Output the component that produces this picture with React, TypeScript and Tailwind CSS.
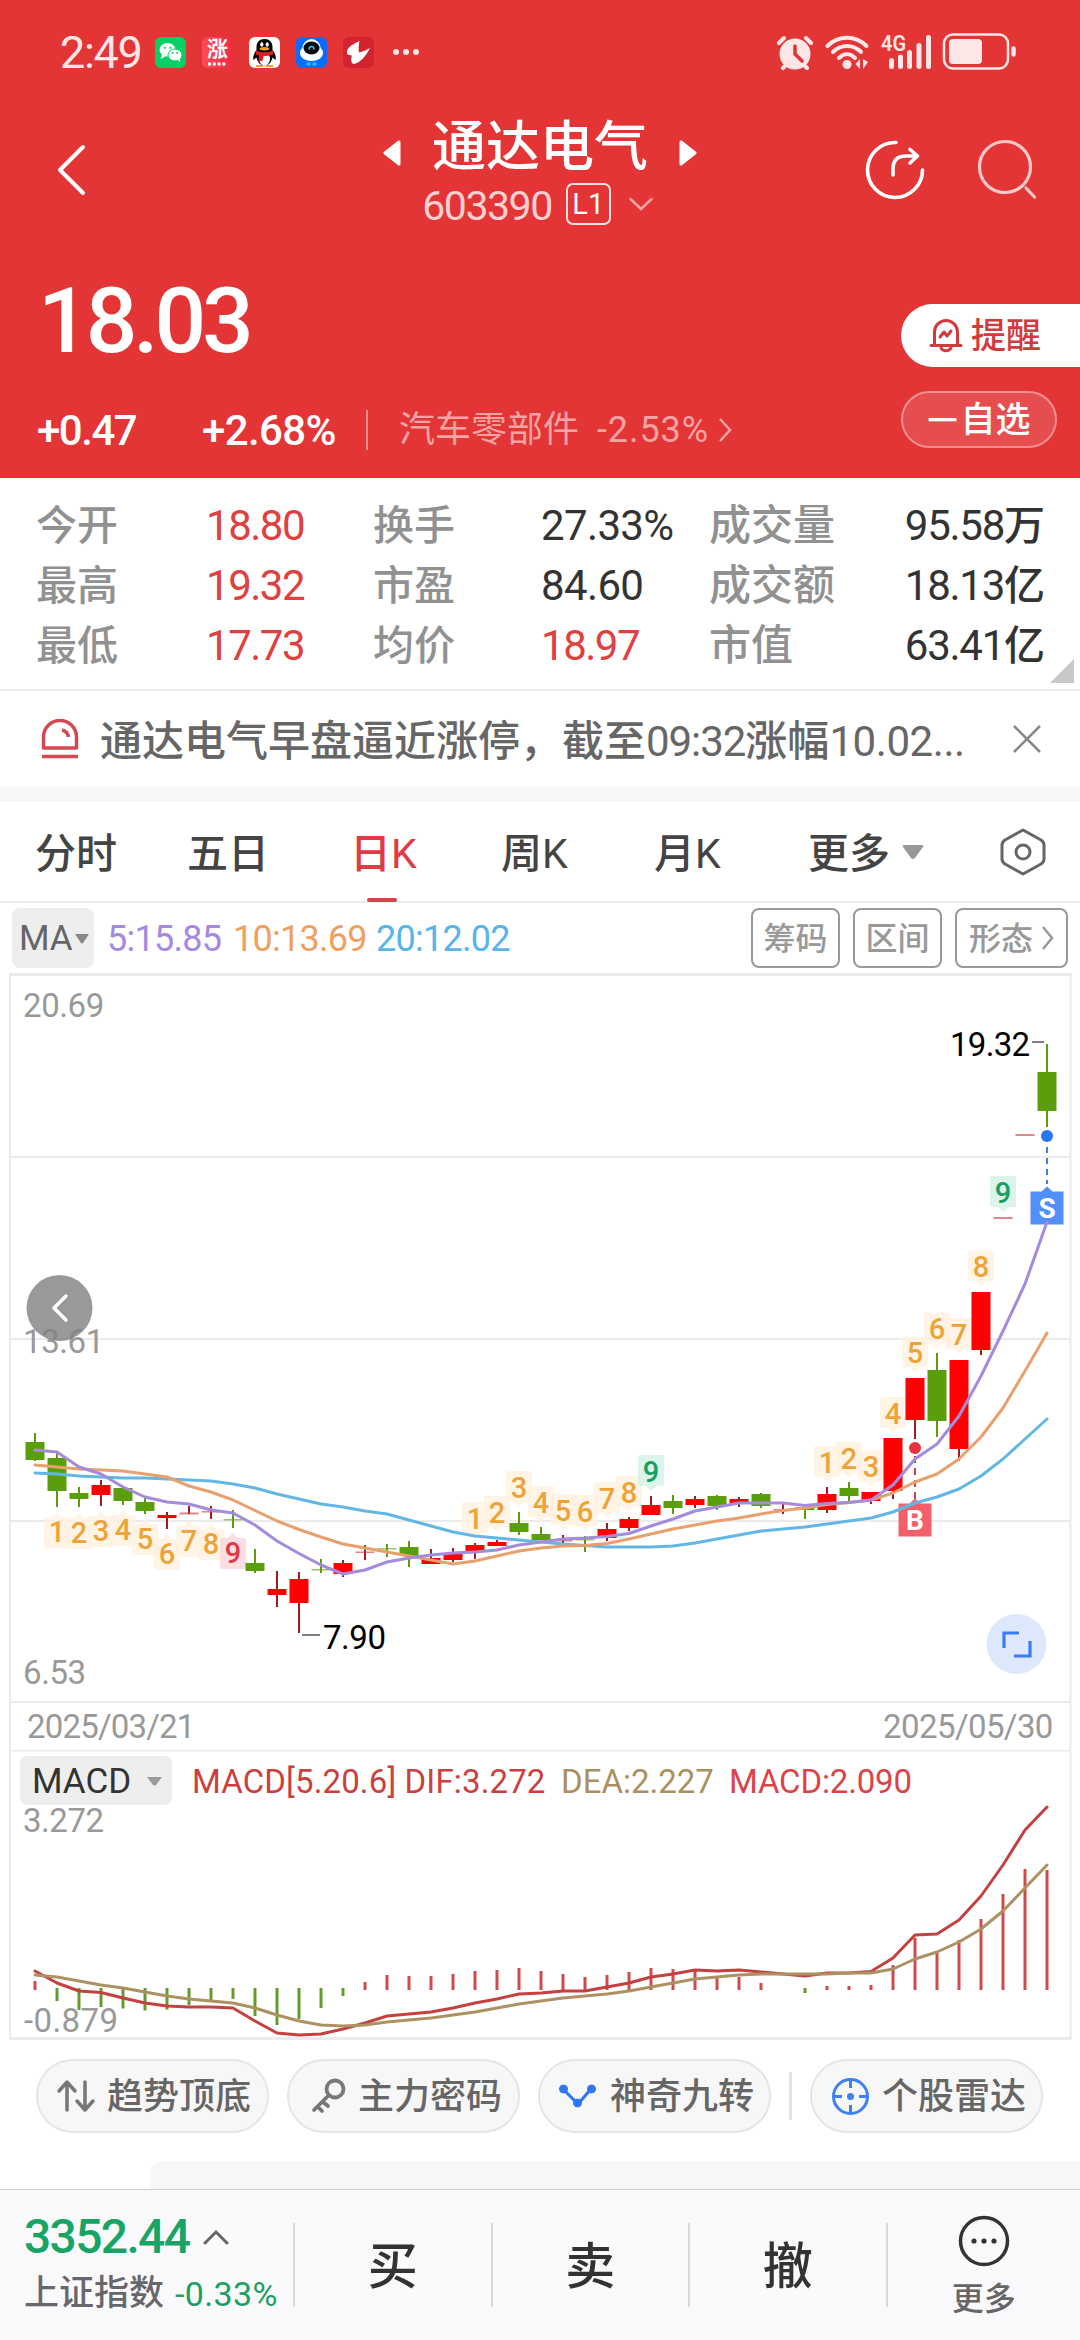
import React from 'react';

const X0 = 35;
const STEP = 22;
const RED = '#fe0000';
const GREEN = '#5a9e0c';

// [direction, high, low, body top, body bottom] in chart pixels
type Candle = ['r' | 'g', number, number, number, number];

const candles: Candle[] = [
  ['g', 1433, 1461, 1442, 1460],
  ['g', 1453, 1507, 1458, 1491],
  ['g', 1487, 1507, 1493, 1499],
  ['r', 1480, 1506, 1485, 1495],
  ['g', 1488, 1505, 1488, 1501],
  ['g', 1497, 1514, 1502, 1511],
  ['r', 1512, 1529, 1515, 1518],
  ['r', 1506, 1514, 1512.5, 1514.5],
  ['r', 1506, 1519, 1511, 1512.5],
  ['g', 1510, 1528, 1519, 1520.5],
  ['g', 1549, 1573, 1563, 1571],
  ['r', 1571, 1607, 1589, 1595],
  ['r', 1572, 1633, 1579, 1603],
  ['g', 1559, 1573, 1569, 1570.5],
  ['r', 1560, 1577, 1563, 1574],
  ['r', 1545, 1560, 1551.5, 1553],
  ['g', 1544, 1557, 1548, 1549.5],
  ['g', 1541, 1567, 1547, 1556],
  ['r', 1549, 1564, 1558, 1564],
  ['r', 1548, 1562, 1553, 1560],
  ['r', 1543, 1559, 1545, 1551],
  ['r', 1540, 1546, 1542, 1546],
  ['g', 1512, 1535, 1523, 1532],
  ['g', 1527, 1540, 1534, 1540],
  ['r', 1535, 1544, 1540, 1541.5],
  ['g', 1536, 1552, 1539, 1540.5],
  ['r', 1523, 1541, 1529, 1538],
  ['r', 1517, 1531, 1519, 1528],
  ['r', 1496, 1515, 1505, 1515],
  ['g', 1495, 1514, 1501, 1508],
  ['r', 1496, 1508, 1499, 1505],
  ['g', 1495, 1510, 1496, 1506],
  ['r', 1497, 1507, 1499, 1503],
  ['g', 1493, 1508, 1494, 1506],
  ['r', 1502, 1514, 1509, 1510.5],
  ['g', 1505, 1519, 1507, 1510],
  ['r', 1487, 1513, 1494, 1510],
  ['g', 1482, 1502, 1488, 1496],
  ['r', 1492, 1504, 1492, 1501],
  ['r', 1438, 1499, 1438, 1491],
  ['r', 1378, 1439, 1378, 1420],
  ['g', 1353, 1437, 1370, 1421],
  ['r', 1360, 1461, 1360, 1449],
  ['r', 1292, 1355, 1292, 1350],
  ['r', 1217, 1217, 1217, 1219],
  ['r', 1134, 1134, 1134, 1136],
  ['g', 1044, 1127, 1072, 1111],
];

const ma5 = [1450, 1452, 1467, 1474, 1487, 1497, 1502, 1504, 1510, 1513, 1525, 1541, 1553.5, 1565, 1574, 1570, 1562, 1558, 1555, 1553, 1552, 1550, 1545, 1542, 1539, 1538, 1536.5, 1533.5, 1526, 1519, 1511, 1507, 1503, 1503, 1503, 1505.5, 1503.5, 1502.5, 1500, 1485, 1459, 1444, 1416, 1376, 1331, 1284, 1222];
const ma10 = [1465, 1467, 1469, 1470, 1471, 1474, 1477, 1486, 1492, 1500, 1510.5, 1521, 1529.5, 1537, 1544, 1548, 1552, 1556, 1560, 1564, 1561, 1556, 1551, 1548, 1546, 1545.5, 1543.5, 1539, 1534, 1529, 1525, 1521, 1518, 1514, 1510.5, 1508, 1504.5, 1502.5, 1500, 1493, 1482, 1474, 1459, 1437, 1408, 1371, 1333];
const ma20 = [1473, 1474, 1476, 1477, 1478, 1478, 1479, 1480, 1481, 1484, 1488, 1494, 1499, 1504, 1507, 1511, 1514, 1520, 1526, 1532, 1536, 1538, 1540, 1542, 1544, 1545.5, 1547, 1547, 1547, 1546, 1543, 1539, 1535, 1531, 1529, 1527, 1524, 1521, 1518, 1512, 1503, 1497, 1489, 1476, 1459, 1439, 1419];

// nine-turn counters: [bar index, digit, centre y]
const marksBelow: [number, number, number][] = [
  [1, 1, 1531.5], [2, 2, 1532], [3, 3, 1530], [4, 4, 1529], [5, 5, 1538],
  [6, 6, 1553], [7, 7, 1540], [8, 8, 1543], [9, 9, 1552],
];
const marksAbove: [number, number, number][] = [
  [20, 1, 1518], [21, 2, 1512], [22, 3, 1487], [23, 4, 1502], [24, 5, 1510],
  [25, 6, 1511], [26, 7, 1498], [27, 8, 1492], [28, 9, 1471],
  [36, 1, 1462], [37, 2, 1458], [38, 3, 1466.5], [39, 4, 1413], [40, 5, 1352.5],
  [41, 6, 1328.5], [42, 7, 1334], [43, 8, 1266.5], [44, 9, 1192],
];

const hist = [1981, 2001, 2010, 2007, 2008.5, 2010.5, 2009.5, 2005, 2000, 1999, 2016, 2025, 2019, 2008, 1996, 1982, 1975, 1976, 1976, 1974, 1971, 1970, 1968, 1971, 1974, 1977, 1975, 1972, 1968, 1969, 1970, 1978, 1977, 1983, 1989, 1993, 1986, 1986, 1985, 1965, 1938, 1953, 1940, 1919, 1894, 1869, 1870];
const dif = [1971, 1983, 1991, 1992.5, 1998, 2003, 2006, 2007, 2007, 2008, 2021, 2033, 2035, 2034, 2029, 2023, 2016, 2014, 2012, 2008, 2003, 1999, 1994, 1993, 1991, 1991, 1987, 1983, 1977, 1974, 1970, 1971, 1970, 1972, 1974, 1976, 1973, 1973, 1971.5, 1958, 1935, 1934, 1920, 1896, 1865, 1830, 1807];
const dea = [1975, 1977, 1981, 1985, 1988, 1992, 1996, 1999, 2001, 2003, 2008, 2015, 2021, 2025, 2026, 2025, 2022, 2020, 2018, 2015, 2012, 2008, 2004, 2001, 1998, 1996, 1994, 1991, 1987, 1983, 1979, 1977, 1975, 1974, 1974, 1974, 1974, 1973, 1973, 1969, 1959, 1952, 1942, 1929, 1911, 1888, 1865];

const toPoints = (ys: number[]) => ys.map((y, i) => `${X0 + STEP * i},${y}`).join(' ');

const stats = [
  ['今开', '18.80', true, '换手', '27.33%', false, '成交量', '95.58', '万'],
  ['最高', '19.32', true, '市盈', '84.60', false, '成交额', '18.13', '亿'],
  ['最低', '17.73', true, '均价', '18.97', true, '市值', '63.41', '亿'],
] as const;

const StatusBar = () => (
  <div className="flex h-[104px] items-center pl-[60px] pr-[63px] text-[#fde6e6]">
    <span className="w-[95px] pt-[2px] text-[45px] leading-[60px] tracking-[-0.03em]">2:49</span>
    <div className="flex items-center gap-4">
      <svg width="31" height="31" viewBox="0 0 31 31">
        <rect width="31" height="31" rx="6" fill="#07cf63" />
        <ellipse cx="12.5" cy="12.8" rx="8" ry="6.8" fill="#fff" />
        <path d="M7 17l-1 5 5-3z" fill="#fff" />
        <ellipse cx="20" cy="18" rx="7" ry="6" fill="#fff" stroke="#07cf63" strokeWidth="1" />
        <path d="M22 22l3 3v-5z" fill="#fff" />
        <g fill="#07cf63">
          <circle cx="10" cy="10.8" r="1.1" /><circle cx="15.3" cy="10.8" r="1.1" />
          <circle cx="17.7" cy="16" r="1" /><circle cx="22.3" cy="16" r="1" />
        </g>
      </svg>
      <span className="flex h-[31px] w-[31px] flex-col items-center rounded-[6px] bg-linear-to-r from-[#ff4a5a] to-[#f02a3c] text-white">
        <b className="text-[21px] leading-[25px]">涨</b>
        <svg width="19" height="4" viewBox="0 0 19 4"><path d="M0 2h19" stroke="#fff" strokeWidth="3" strokeDasharray="3 1.8" /></svg>
      </span>
      <svg width="31" height="31" viewBox="0 0 31 31">
        <rect width="31" height="31" rx="6" fill="#fff" />
        <path d="M15.5 2c-5 0-8 3.5-8 8v3C5 16 3.500 20 4.500 23l3-2.500c1 5 4 8 8 8s7-3 8-8l3 2.500c1-3-.5-7-3-10v-3c0-4.500-3-8-8-8z" fill="#050505" />
        <ellipse cx="15.500" cy="22" rx="5.500" ry="6.500" fill="#fff" />
        <path d="M7 13.500c5 2.500 12 2.500 17 0v4c-3 1.200-7 1.500-9.500 1.500l-1 5h-4l.5-5.500-3-1z" fill="#e01b22" />
        <ellipse cx="12.800" cy="7.500" rx="1.600" ry="2.300" fill="#fff" /><ellipse cx="18.200" cy="7.500" rx="1.600" ry="2.300" fill="#fff" />
        <ellipse cx="15.500" cy="11.800" rx="4.800" ry="1.700" fill="#f8a11c" />
        <path d="M7 29h7M17 29h7" stroke="#f8a11c" strokeWidth="2" />
      </svg>
      <svg width="31" height="31" viewBox="0 0 31 31">
        <rect width="31" height="31" rx="6" fill="#0a6cff" />
        <ellipse cx="15.500" cy="16" rx="11.500" ry="8" fill="#fff" />
        <circle cx="15.500" cy="11" r="9" fill="#fff" />
        <ellipse cx="15.500" cy="11" rx="8" ry="6.500" fill="#050a10" />
        <path d="M13 12.500c0-4 5-4 5 0" fill="none" stroke="#1fd3e0" strokeWidth="1.500" />
        <path d="M12.500 25.500v3M18.500 25.500v3" stroke="#20c6f0" strokeWidth="4" />
      </svg>
      <svg width="31" height="31" viewBox="0 0 31 31">
        <rect width="31" height="31" rx="6" fill="#d32331" />
        <path d="M16.500 4C10 7 3 11 4 16c.5 2.500 3 2.200 5 2.500-1.500 4-1 8 2 8.500 6-1 12-8 16-16-4 2-7 3.500-11 4.500-.5-4-.5-7 .5-11.500z" fill="#fff" />
      </svg>
    </div>
    <svg className="ml-[19px]" width="26" height="8" viewBox="0 0 26 8" fill="currentColor">
      <circle cx="3" cy="4" r="3" /><circle cx="13" cy="4" r="3" /><circle cx="23" cy="4" r="3" />
    </svg>
    <svg className="ml-auto" width="240" height="40" viewBox="776 32 240 40" fill="none" stroke="currentColor" strokeLinecap="round">
      <circle cx="794" cy="54" r="15.500" fill="currentColor" stroke="none" />
      <path d="M778 43l5-5M810 43l-5-5M782 68l4-4M806 68l-4-4" strokeWidth="4" />
      <path d="M794 46v8l7 7" stroke="#e33536" strokeWidth="3.500" />
      <path d="M826.500 46c11-11 28-11 39 0M832 52c8-8 20-8 28 0M838 58c5-5 11-5 16 0" strokeWidth="4" />
      <circle cx="846" cy="64.500" r="4.500" fill="currentColor" stroke="none" />
      <path d="M859 59v10l-4.500-5zM862 59v10l5-7z" fill="currentColor" stroke="none" />
      <path d="M890.500 60.500v6M899.500 57v9.500M908.500 52.500v14M918 45.500v21M927.500 37.500v29" strokeWidth="5" />
      <text x="880" y="51" fontSize="22" fontWeight="600" textLength="25" lengthAdjust="spacingAndGlyphs" fill="currentColor" stroke="none">4G</text>
      <rect x="943" y="34.500" width="64" height="34" rx="9" strokeWidth="2.500" />
      <rect x="948" y="39" width="33" height="25" rx="4" fill="currentColor" stroke="none" />
      <path d="M1012.500 48.500v6" strokeWidth="4.500" />
    </svg>
  </div>
);

const Header = () => (
  <header className="h-[478px] bg-[#e33536] text-white">
    <StatusBar />
    <nav className="grid h-[130px] grid-cols-[1fr_auto_1fr]">
      <svg className="mt-[38px] ml-[56px]" width="32" height="56" viewBox="0 0 32 56" fill="none" stroke="currentColor" strokeWidth="4" strokeLinecap="round" strokeLinejoin="round">
        <path d="M27 5L4 28l23 23" />
      </svg>
      <div className="flex flex-col items-center pt-[19px]">
        <div className="flex h-[60px] items-center gap-[31px]">
          <svg width="18" height="26" viewBox="0 0 18 26" fill="currentColor" stroke="currentColor" strokeWidth="3" strokeLinejoin="round"><path d="M2 13L16 2v22z" /></svg>
          <h1 className="pb-[11px] text-[54px] leading-[60px] font-medium">通达电气</h1>
          <svg width="18" height="26" viewBox="0 0 18 26" fill="currentColor" stroke="currentColor" strokeWidth="3" strokeLinejoin="round"><path d="M16 13L2 2v22z" /></svg>
        </div>
        <div className="mr-[5px] flex h-[42px] items-center">
          <span className="pt-[4px] text-[41px] leading-[42px] tracking-[-0.035em] text-[#fcd0d0]">603390</span>
          <span className="ml-[14px] flex h-[42px] w-[45px] items-center justify-center rounded-[7px] border-2 border-[#fde0e0] text-[29px] leading-[38px]">L1</span>
          <svg className="ml-[18px]" width="24" height="14" viewBox="0 0 24 14" fill="none" stroke="#f7a5a5" strokeWidth="2.500" strokeLinecap="round"><path d="M1.500 2L12 12 22.500 2" /></svg>
        </div>
      </div>
      <div className="mt-[32px] flex justify-end gap-[48px] pr-[40px]">
        <svg width="64" height="64" viewBox="863 136 64 64" fill="none" stroke="currentColor" strokeWidth="3.600" strokeLinecap="round" strokeLinejoin="round">
          <path d="M895 142.500A27.500 27.500 0 1 0 921.500 170" />
          <path d="M892 175v-6c0-9 5-13 13-13h11M909 149.500l7.500 6.500-7.500 7" />
        </svg>
        <svg width="64" height="64" viewBox="976 136 64 64" fill="none" stroke="#fcc9c9" strokeWidth="3.200" strokeLinecap="round">
          <circle cx="1005" cy="167" r="25.500" /><path d="M1026 188l8.500 9" />
        </svg>
      </div>
    </nav>
    <div className="flex justify-between">
      <div>
        <div className="h-[170px] pt-[2px] pl-[38px] text-[91px] leading-[170px] font-medium tracking-[-0.045em]">18.03</div>
        <div className="flex h-[52px] items-center pl-[37px] text-[42px] leading-[52px] font-medium tracking-[-0.035em]">
          <span className="w-[165px] pt-[2px]">+0.47</span>
          <span className="w-[164px] pt-[2px] tracking-[-0.015em]">+2.68%</span>
          <i className="h-10 w-[2px] bg-[#f08c8c]" />
          <span className="ml-[31px] text-[36px] font-normal tracking-normal text-[#f6a3a3]">汽车零部件</span>
          <span className="ml-[18px] text-[36px] font-normal tracking-[0.025em] text-[#f6a3a3]">-2.53%</span>
          <svg className="ml-[9px]" width="15" height="26" viewBox="0 0 15 26" fill="none" stroke="#f6a3a3" strokeWidth="2.500"><path d="M2 2l10 11L2 24" /></svg>
        </div>
      </div>
      <div className="flex w-[179px] flex-col gap-6 pt-[70px]">
        <button className="flex h-[63px] items-center rounded-l-full bg-white pl-[28px] text-[35px] leading-[40px] font-medium text-[#d23a3c]">
          <svg width="34" height="36" viewBox="0 0 34 36" fill="none" stroke="currentColor" strokeWidth="3" strokeLinecap="round" strokeLinejoin="round">
            <path d="M5.500 27V14a11.500 11.500 0 0 1 23 0v13M2 27.500h30" />
            <path d="M12 30a5.500 4.500 0 0 0 10 0M11 19l4-5 3 4 4-5" />
          </svg>
          <span className="ml-[8px] pt-[2px]">提醒</span>
        </button>
        <button className="flex h-[57px] w-[156px] items-center justify-center rounded-full border-2 border-[#f08f90] bg-[#e64d4e] pt-[3px] text-[35px] leading-[40px] font-medium">
          <span className="mr-[3px] text-[30px]">一</span>自选
        </button>
      </div>
    </div>
  </header>
);

const Stats = () => (
  <section className="relative h-[213px] border-b-2 border-[#ebebeb] pt-[18px] text-[42px] leading-[60px] text-[#333]">
    {stats.map((s) => (
      <div key={s[0]} className="grid h-[60px] grid-cols-[170px_167px_168px_168px_1fr_auto] pr-[35px] pl-[36px]">
        <span className="text-[41px] text-[#919191]">{s[0]}</span>
        <span className="tracking-[-0.035em] text-[#df4040]">{s[1]}</span>
        <span className="text-[41px] text-[#919191]">{s[3]}</span>
        <span className={s[5] ? 'tracking-[-0.035em] text-[#df4040]' : 'tracking-[-0.015em]'}>{s[4]}</span>
        <span className="text-[42px] text-[#919191]">{s[6]}</span>
        <span><span className="tracking-[-0.03em]">{s[7]}</span><span className="text-[41px]">{s[8]}</span></span>
      </div>
    ))}
    <svg className="absolute right-[6px] bottom-[6px]" width="24" height="24" viewBox="0 0 24 24"><path d="M24 0v24H0z" fill="#c8c8c8" /></svg>
  </section>
);

const Notice = () => (
  <section className="flex h-[96px] items-center pl-[40px] text-[42px] leading-[60px] text-[#666]">
    <svg width="40" height="40" viewBox="0 0 40 40" fill="none" stroke="#d44a50" strokeWidth="3.500">
      <path d="M3.500 29V18a15 15 0 0 1 33 0v11zM2 37.500h36" strokeLinejoin="round" /><path d="M22 11c4 1 6 3.500 6.500 7" />
    </svg>
    <span className="ml-[20px] pt-[5px] whitespace-nowrap">
      通达电气早盘逼近涨停，截至<span className="tracking-[-0.025em]">09:32</span>涨幅<span className="tracking-[-0.01em]">10.02...</span>
    </span>
    <svg className="mr-[38px] ml-auto" width="30" height="30" viewBox="0 0 30 30" stroke="#888" strokeWidth="2.500"><path d="M2 2l26 26M28 2L2 28" /></svg>
  </section>
);

const Tabs = () => (
  <section className="flex h-[101px] items-center border-b-2 border-[#ebebeb] pl-[35px] text-[41px] leading-[60px] text-[#444]">
    <span className="w-[152px] pt-[4px]">分时</span>
    <span className="w-[163px] pt-[4px]">五日</span>
    <span className="relative w-[151px] pt-[4px] text-[#e03a44]">
      日K
      <i className="absolute -bottom-[18px] left-[17px] h-[4px] w-[30px] rounded-full bg-[#d5434b]" />
    </span>
    <span className="w-[153px] pt-[4px]">周K</span>
    <span className="w-[154px] pt-[4px]">月K</span>
    <span className="pt-[4px]">更多</span>
    <svg className="ml-[12px]" width="22" height="14" viewBox="0 0 22 14"><path d="M2 0h18q2 0 1 2l-8 11q-2 2-4 0L1 2q-1-2 1-2z" fill="#999" /></svg>
    <svg className="mr-[33px] ml-auto" width="48" height="50" viewBox="0 0 48 50" fill="none" stroke="#666" strokeWidth="3" strokeLinejoin="round">
      <path d="M24 3l18 10q3 2 3 5v14q0 3-3 5L24 47 6 37q-3-2-3-5V18q0-3 3-5z" /><circle cx="24" cy="25" r="7" />
    </svg>
  </section>
);

const MaRow = () => (
  <section className="flex h-[70px] items-center gap-[13px] pr-[12px] pl-[12px] text-[36px] leading-[60px]">
    <span className="flex h-[60px] w-[82px] items-center rounded-[8px] bg-[#eeeeee] pt-[2px] pl-[7px] text-[35px] text-[#666]">
      MA
      <svg className="ml-[2px]" width="14" height="10" viewBox="0 0 14 10"><path d="M0 0h14L8 9q-1 1-2 0z" fill="#888" /></svg>
    </span>
    <span className="w-[113px] pt-[2px] tracking-[-0.02em] whitespace-nowrap text-[#a58ae0]">5:15.85</span>
    <span className="w-[130px] pt-[2px] tracking-[-0.02em] whitespace-nowrap text-[#ef9f62]">10:13.69</span>
    <span className="pt-[2px] tracking-[-0.02em] whitespace-nowrap text-[#58b5e8]">20:12.02</span>
    <div className="ml-auto flex gap-[13px] text-[32px] leading-[59px] text-[#999]">
      <span className="h-[60px] w-[89px] rounded-[8px] border-2 border-[#999] text-center">筹码</span>
      <span className="h-[60px] w-[89px] rounded-[8px] border-2 border-[#999] text-center">区间</span>
      <span className="flex h-[60px] w-[113px] items-center justify-center gap-[8px] rounded-[8px] border-2 border-[#999]">
        <span className="pt-[2px]">形态</span>
        <svg width="13" height="26" viewBox="0 0 13 26" fill="none" stroke="#999" strokeWidth="2.500"><path d="M2 2l9 11-9 11" /></svg>
      </span>
    </div>
  </section>
);

const Mark = ({ i, n, y, below }: { i: number; n: number; y: number; below?: boolean }) => {
  const x = X0 + STEP * i;
  const box = n === 9 ? (below ? '#fbd5da' : '#d3f1e3') : '#fff1e0';
  const ink = n === 9 ? (below ? '#e03a4a' : '#17a063') : '#eda337';
  return (
    <g>
      <rect x={x - 13} y={y - (below ? 14 : 16)} width="26" height="31" rx="2" fill={box} fillOpacity="0.8" />
      <path d={below ? `M${x - 5} ${y - 14}l5-5 5 5z` : `M${x - 5} ${y + 15}l5 5 5-5z`} fill={box} fillOpacity="0.8" />
      <text x={x} y={y + 10.500} fontSize="29" fontWeight="500" textAnchor="middle" fill={ink}>{n}</text>
    </g>
  );
};

const PriceChart = () => (
  <svg className="block" width="1080" height="778" viewBox="0 972 1080 778">
    <g stroke="#ebebeb" strokeWidth="2" fill="none">
      <path d="M9 974.500h1063" strokeWidth="3" />
      <path d="M10 974v776M1070.500 974v776M10 1157h1060M10 1339h1060M10 1521h1060M10 1702h1060" />
    </g>
    <g fontSize="33" fill="#999" letterSpacing="-0.4">
      <text x="23" y="1017">20.69</text>
      <text x="23" y="1353">13.61</text>
      <text x="23" y="1684">6.53</text>
      <text x="27" y="1738" textLength="168">2025/03/21</text>
      <text x="883" y="1738" textLength="170">2025/05/30</text>
    </g>
    {marksBelow.map(([i, n, y]) => <Mark key={i} i={i} n={n} y={y} below />)}
    {marksAbove.map(([i, n, y]) => <Mark key={i} i={i} n={n} y={y} />)}
    {candles.map(([dir, hi, lo, top, bottom], i) => {
      const x = X0 + STEP * i;
      const thin = bottom - top <= 2;
      return (
        <g key={i} fill={dir === 'r' ? RED : GREEN}>
          <rect x={x - 1} y={hi} width="2" height={lo - hi} fill={dir === 'r' ? '#a01c20' : GREEN} />
          <rect x={x - 9.500} y={top} width="19" height={bottom - top} fillOpacity={thin ? 0.6 : 1} fill={thin && dir === 'r' ? '#d0343a' : undefined} />
        </g>
      );
    })}
    <g>
      <path d="M1047 1147v37" stroke="#3f82e6" strokeWidth="2" strokeDasharray="6 5" />
      <circle cx="1047" cy="1136" r="6" fill="#2476f2" />
      <path d="M1030.500 1191.500h11l5.500-5 5.500 5h11v33h-33z" fill="#528ff9" />
      <text x="1047" y="1218" fontSize="28" fontWeight="700" textAnchor="middle" fill="#fff">S</text>
      <path d="M915 1456v45" stroke="#d8404e" strokeWidth="2" strokeDasharray="7 5" />
      <circle cx="915" cy="1448" r="6" fill="#e8333f" />
      <path d="M898.500 1503.500h11l5.500-5 5.500 5h11v33h-33z" fill="#f3606b" />
    </g>
    <g fill="none" strokeWidth="3" strokeLinejoin="round" strokeLinecap="round">
      <polyline points={toPoints(ma20)} stroke="#62b7e4" />
      <polyline points={toPoints(ma10)} stroke="#e9a06d" />
      <polyline points={toPoints(ma5)} stroke="#a48bdc" />
    </g>
    <text x="915" y="1530" fontSize="28" fontWeight="700" textAnchor="middle" fill="#fff">B</text>
    <path d="M1032 1042h12M302 1635h18" stroke="#808080" strokeWidth="2" />
    <g fontSize="33" fill="#000">
      <text x="950" y="1056" textLength="80">19.32</text>
      <text x="323" y="1648.500" textLength="63">7.90</text>
    </g>
    <circle cx="59.500" cy="1308" r="33" fill="#7f7f7f" fillOpacity="0.8" />
    <path d="M66 1296l-12 12 12 12" fill="none" stroke="#fff" strokeWidth="3.500" strokeLinecap="round" strokeLinejoin="round" />
    <circle cx="1016.500" cy="1644" r="30" fill="#dde8fd" />
    <path d="M1004 1648v-15h15M1014 1656h16v-15" fill="none" stroke="#3b7df0" strokeWidth="3.200" />
  </svg>
);

const MacdPane = () => (
  <section className="relative h-[290px]">
    <svg className="absolute inset-0" width="1080" height="290" viewBox="0 1750 1080 290">
      <path d="M10 1750.500h1060.500v288H10z" fill="none" stroke="#ebebeb" strokeWidth="2" />
      <path d="M9 2038.500h1063" stroke="#ebebeb" strokeWidth="3" />
      <g fontSize="33" fill="#999">
        <text x="23" y="1831.500" textLength="81">3.272</text>
        <text x="24" y="2032" textLength="94">-0.879</text>
      </g>
      {hist.map((y, i) => y !== 1989 && (
        <line key={i} x1={X0 + STEP * i} x2={X0 + STEP * i} y1={y > 1989 ? 1988 : 1990} y2={y} stroke={y > 1989 ? '#649b2c' : '#cf4a4c'} strokeWidth="3" />
      ))}
      <g fill="none" strokeWidth="3" strokeLinejoin="round" strokeLinecap="round">
        <polyline points={toPoints(dif)} stroke="#c5413f" />
        <polyline points={toPoints(dea)} stroke="#ae9163" />
      </g>
    </svg>
    <div className="relative flex items-center pt-[5px] pl-[20px] text-[33px] leading-[49px] whitespace-nowrap">
      <span className="flex h-[49px] w-[152px] items-center rounded-[7px] bg-[#eeeeee] pt-[2px] pl-[12px] text-[35px] text-[#333]">
        MACD
        <svg className="ml-[16px]" width="15" height="9" viewBox="0 0 15 9"><path d="M0 0h15L9 8q-1.500 1-3 0z" fill="#999" /></svg>
      </span>
      <span className="ml-[20px] w-[369px] pt-[2px] tracking-[0.004em] text-[#cb403f]">MACD[5.20.6] DIF:3.272</span>
      <span className="w-[168px] pt-[2px] text-[#ab8f60]">DEA:2.227</span>
      <span className="pt-[2px] tracking-[-0.005em] text-[#dc4349]">MACD:2.090</span>
    </div>
  </section>
);

const chip = 'flex h-[74px] w-[233px] items-center rounded-full border-2 border-[#e5e5e5] bg-[#f7f7f7] pl-[18px] text-[36px] leading-[40px] text-[#666] whitespace-nowrap';

const Chips = () => (
  <section className="flex h-[121px] items-start gap-[18px] pt-[19px] pl-[36px]">
    <span className={chip}>
      <svg width="40" height="36" viewBox="0 0 40 36" fill="none" stroke="#777" strokeWidth="3.500" strokeLinecap="round" strokeLinejoin="round">
        <path d="M11 32V5M3 13l8-9 8 9M29 4v27M21 23l8 9 8-9" />
      </svg>
      <span className="ml-[11px] pt-[2px]">趋势顶底</span>
    </span>
    <span className={chip}>
      <svg className="ml-[4px]" width="36" height="36" viewBox="0 0 36 36" fill="none" stroke="#777" strokeWidth="3.800" strokeLinecap="round">
        <circle cx="24" cy="11" r="8.500" /><path d="M18 17L3 32M12 24l5 4M7 29l4 4" />
      </svg>
      <span className="ml-[11px] pt-[2px]">主力密码</span>
    </span>
    <span className={chip}>
      <svg width="40" height="36" viewBox="0 0 40 36" fill="#2b78f5" stroke="#2b78f5">
        <path d="M5 11l15 15L33 11" fill="none" strokeWidth="3" />
        <circle cx="5.500" cy="11" r="4" /><circle cx="19.500" cy="25" r="4" /><circle cx="33.500" cy="11" r="4" />
      </svg>
      <span className="ml-[12px] pt-[2px]">神奇九转</span>
    </span>
    <i className="mt-[13px] h-[48px] w-[3px] bg-[#e2e2e2]" />
    <span className={chip}>
      <svg className="ml-[1px]" width="39" height="39" viewBox="0 0 39 39" fill="none" stroke="#3f82ee" strokeWidth="3">
        <circle cx="19.500" cy="19.500" r="17" /><path d="M19.500 3v8M19.500 28v8M3 19.500h8M28 19.500h8" />
        <circle cx="19.500" cy="19.500" r="3.500" fill="#3f82ee" stroke="none" />
      </svg>
      <span className="ml-[12px] pt-[2px]">个股雷达</span>
    </span>
  </section>
);

const BottomBar = () => (
  <footer className="flex h-[151px] border-t border-[#cfcfd1] bg-[#fafafc] text-[50px] text-[#333]">
    <div className="w-[293px] pt-[22px] pl-[24px]">
      <div className="flex h-[50px] items-center text-[48px] leading-[50px] font-medium tracking-[-0.035em] text-[#18a464]">
        3352.44
        <svg className="ml-[14px]" width="26" height="16" viewBox="0 0 26 16" fill="none" stroke="#666" strokeWidth="3" strokeLinecap="round"><path d="M2 14L13 3l11 11" /></svg>
      </div>
      <div className="mt-[9px] flex h-[46px] items-center text-[35px] leading-[46px] whitespace-nowrap text-[#68686c]">
        上证指数<span className="ml-[11px] text-[34px] tracking-[0.01em] text-[#1d9f63]">-0.33%</span>
      </div>
    </div>
    {['买', '卖', '撤'].map((t) => (
      <div key={t} className="flex w-[197.500px] items-center font-medium">
        <i className="h-[84px] w-[2px] bg-[#d9d9db]" />
        <span className="flex-1 pt-[4px] text-center leading-[60px]">{t}</span>
      </div>
    ))}
    <div className="flex flex-1 items-center">
      <i className="h-[84px] w-[2px] bg-[#d9d9db]" />
      <div className="flex flex-1 flex-col items-center pt-[3px] text-[32px] leading-[40px] text-[#666]">
        <svg width="52" height="52" viewBox="0 0 52 52" fill="none" stroke="#333" strokeWidth="3.500">
          <circle cx="26" cy="26" r="23.500" />
          <g fill="#333" stroke="none"><circle cx="16" cy="26" r="2.600" /><circle cx="26" cy="26" r="2.600" /><circle cx="36" cy="26" r="2.600" /></g>
        </svg>
        <span className="mt-[12px]">更多</span>
      </div>
    </div>
  </footer>
);

const App: React.FC = () => {
  return (
    <div className="h-[2340px] w-[1080px] overflow-hidden bg-white font-['Roboto','Noto_Sans_CJK_SC',sans-serif] font-[450]">
      <Header />
      <Stats />
      <Notice />
      <div className="h-[15px] bg-[#f7f7f7]" />
      <Tabs />
      <MaRow />
      <div className="-mt-px">
        <PriceChart />
      </div>
      <MacdPane />
      <Chips />
      <div className="ml-[150px] h-[28px] rounded-tl-[12px] bg-[#f7f7f7]" />
      <BottomBar />
    </div>
  );
};

export default App;
